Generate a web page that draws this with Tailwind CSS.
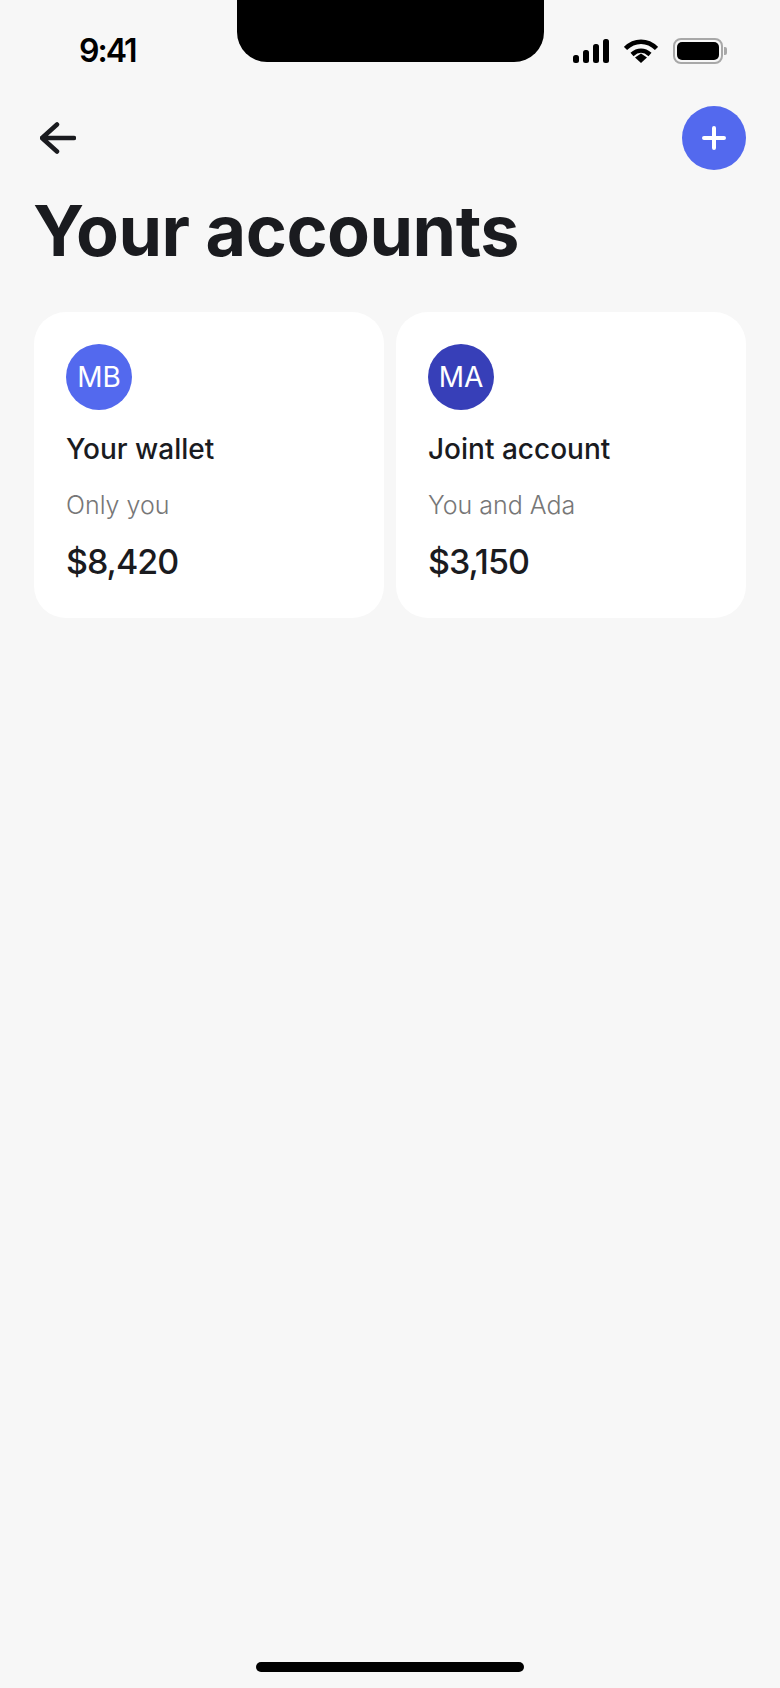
<!doctype html>
<html lang="en">
<head>
<meta charset="utf-8">
<title>Your accounts</title>
<script src="https://cdn.jsdelivr.net/npm/@tailwindcss/browser@4"></script>
</head>
<body class="bg-[#f7f7f7] font-['Inter',sans-serif] text-[#1a1b1f]">
<div class="relative flex h-[1688px] w-[780px] flex-col overflow-hidden">
  <!-- device cut-out -->
  <div class="absolute left-[237px] top-0 h-[62px] w-[307px] rounded-b-[30px] bg-black"></div>

  <!-- status bar -->
  <div class="flex h-[106px] items-start justify-between pl-[79px] pr-[53px] pt-[31px]">
    <span class="text-[32px] font-semibold leading-[40px] tracking-[-2px] text-black">9:41</span>
    <div class="flex items-center gap-[15px] pt-[7px]">
      <svg class="h-[24px] w-[36px]" viewBox="0 0 36 24" fill="#000">
        <rect x="0" y="16" width="6" height="8" rx="2.5"/>
        <rect x="10" y="11" width="6" height="13" rx="2.5"/>
        <rect x="20" y="5" width="6" height="19" rx="2.5"/>
        <rect x="30" y="0" width="6" height="24" rx="2.5"/>
      </svg>
      <svg class="h-[24px] w-[34px]" viewBox="0 0 34 24" fill="none" stroke="#000">
        <path d="M1.500 9.500C10.500 0.500 23.500 0.500 32.500 9.500" stroke-width="4.500"/>
        <path d="M8 15.500C13.500 10.500 20.500 10.500 26 15.500" stroke-width="4.500"/>
        <path d="M11 18.500L17 14.500L23 18.500L17 24Z" fill="#000" stroke="none"/>
      </svg>
      <div class="flex items-center gap-[1px]">
        <div class="flex h-[26px] w-[50px] rounded-[8px] border-2 border-[#a8a8a8] p-[2px]">
          <div class="flex-1 rounded-[5px] bg-black"></div>
        </div>
        <div class="h-[8px] w-[3px] rounded-r-[2px] bg-[#a8a8a8]"></div>
      </div>
    </div>
  </div>

  <!-- top actions -->
  <div class="flex items-center justify-between pl-[40px] pr-[34px]">
    <svg class="h-[32px] w-[36px]" viewBox="0 0 36 32" fill="none" stroke="#1a1b1f" stroke-width="4.500" stroke-linecap="round" stroke-linejoin="round">
      <path d="M34 16H3M17 2.500L2 16L17 29.500"/>
    </svg>
    <button class="flex h-[64px] w-[64px] items-center justify-center rounded-full bg-[#5369ee]">
      <svg class="h-[24px] w-[24px]" viewBox="0 0 24 24" fill="none" stroke="#fff" stroke-width="4" stroke-linecap="round">
        <path d="M12 2V22M2 12H22"/>
      </svg>
    </button>
  </div>

  <h1 class="pl-[33px] pt-[19px] text-[70px] font-bold leading-[84px] tracking-[-0.5px]">Your accounts</h1>

  <!-- account cards -->
  <div class="mt-[39px] grid grid-cols-2 gap-[12px] px-[34px]">
    <div class="flex h-[306px] flex-col rounded-[32px] bg-white p-[32px]">
      <div class="flex h-[66px] w-[66px] items-center justify-center rounded-full bg-[#5369ee] text-[28px] font-normal text-white">MB</div>
      <div class="mt-[23px] text-[28px] font-medium leading-[32px]">Your wallet</div>
      <div class="mt-[24px] text-[25px] font-light leading-[32px] text-[#777]">Only you</div>
      <div class="mt-[21px] text-[34px] font-medium leading-[40px] tracking-[-1px]">$8,420</div>
    </div>
    <div class="flex h-[306px] flex-col rounded-[32px] bg-white p-[32px]">
      <div class="flex h-[66px] w-[66px] items-center justify-center rounded-full bg-[#373fb8] text-[28px] font-normal text-white">MA</div>
      <div class="mt-[23px] text-[28px] font-medium leading-[32px]">Joint account</div>
      <div class="mt-[24px] text-[25px] font-light leading-[32px] text-[#777]">You and Ada</div>
      <div class="mt-[21px] text-[34px] font-medium leading-[40px] tracking-[-1px]">$3,150</div>
    </div>
  </div>

  <!-- home indicator -->
  <div class="mt-auto mb-[16px] h-[10px] w-[268px] self-center rounded-full bg-black"></div>
</div>
</body>
</html>
